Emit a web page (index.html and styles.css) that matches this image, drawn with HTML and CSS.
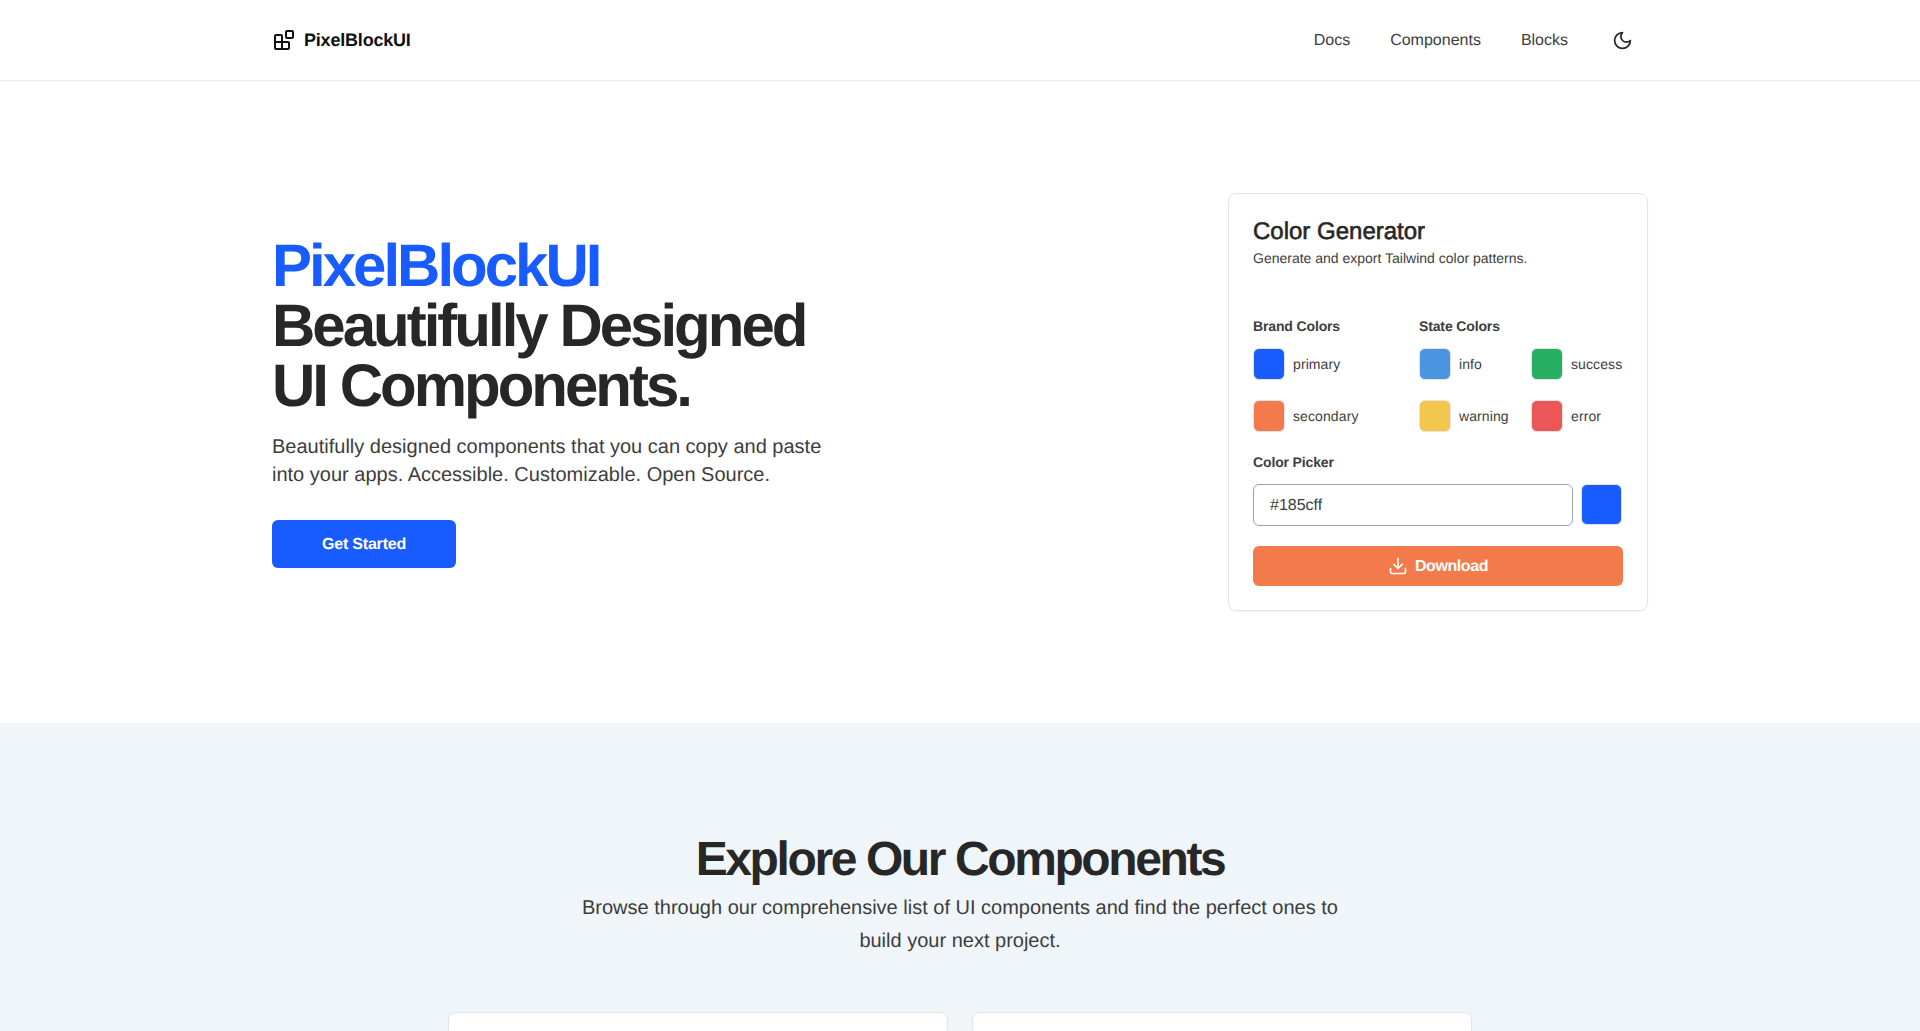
FILE: index.html
```html
<!DOCTYPE html>
<html lang="en">
<head>
    <meta charset="UTF-8">
    <title>PixelBlockUI</title>
    <link rel="stylesheet" href="styles.css">
</head>
<body>

<header class="navbar">
    <div class="navbar-inner">
        <a class="brand">
            <svg class="brand-icon" viewBox="0 0 24 24" fill="none" stroke="currentColor" stroke-width="2" stroke-linecap="round" stroke-linejoin="round">
                <rect x="14" y="3" width="7" height="7" rx="1"></rect>
                <path d="M10 21V8a1 1 0 0 0-1-1H4a1 1 0 0 0-1 1v12a1 1 0 0 0 1 1h12a1 1 0 0 0 1-1v-5a1 1 0 0 0-1-1H3"></path>
            </svg>
            <span>PixelBlockUI</span>
        </a>
        <nav class="nav">
            <a>Docs</a>
            <a>Components</a>
            <a>Blocks</a>
            <svg class="moon" viewBox="0 0 24 24" fill="none" stroke="currentColor" stroke-width="2" stroke-linecap="round" stroke-linejoin="round">
                <path d="M12 3a6 6 0 0 0 9 9 9 9 0 1 1-9-9Z"></path>
            </svg>
        </nav>
    </div>
</header>

<section class="hero">
    <div class="hero-text">
        <h1><span class="accent">PixelBlockUI</span><br>Beautifully Designed<br>UI Components.</h1>
        <p>Beautifully designed components that you can copy and paste into your apps. Accessible. Customizable. Open Source.</p>
        <a class="btn-start">Get Started</a>
    </div>

    <div class="card">
        <h3>Color Generator</h3>
        <p class="card-sub">Generate and export Tailwind color patterns.</p>

        <div class="palettes">
            <div class="palette-brand">
                <h4>Brand Colors</h4>
                <div class="swatches">
                    <div class="swatch"><i class="chip primary"></i>primary</div>
                    <div class="swatch"><i class="chip secondary"></i>secondary</div>
                </div>
            </div>
            <div class="palette-state">
                <h4>State Colors</h4>
                <div class="swatches two">
                    <div class="swatch"><i class="chip info"></i>info</div>
                    <div class="swatch"><i class="chip success"></i>success</div>
                    <div class="swatch"><i class="chip warning"></i>warning</div>
                    <div class="swatch"><i class="chip error"></i>error</div>
                </div>
            </div>
        </div>

        <h4>Color Picker</h4>
        <div class="picker">
            <div class="picker-input">#185cff</div>
            <div class="picker-color"></div>
        </div>
        <a class="btn-download">
            <svg viewBox="0 0 24 24" fill="none" stroke="currentColor" stroke-width="2" stroke-linecap="round" stroke-linejoin="round">
                <path d="M21 15v4a2 2 0 0 1-2 2H5a2 2 0 0 1-2-2v-4"></path>
                <polyline points="7 10 12 15 17 10"></polyline>
                <line x1="12" y1="15" x2="12" y2="3"></line>
            </svg>
            <span>Download</span>
        </a>
    </div>
</section>

<section class="explore">
    <h2>Explore Our Components</h2>
    <p>Browse through our comprehensive list of UI components and find the perfect ones to build your next project.</p>
    <div class="grid">
        <div class="tile"></div>
        <div class="tile"></div>
    </div>
</section>

</body>
</html>
```

FILE: styles.css
```css
* {
    box-sizing: border-box;
    margin: 0;
    padding: 0;
}

body {
    font-family: "Liberation Sans", Arial, sans-serif;
    color: #272727;
    background: #fff;
    text-rendering: geometricPrecision;
}

.navbar {
    height: 81px;
    border-bottom: 1px solid #eee;
    box-shadow: 0 1px 2px rgba(0, 0, 0, 0.03);
}

.navbar-inner {
    width: 1376px;
    height: 100%;
    margin: 0 auto;
    display: flex;
    align-items: center;
    justify-content: space-between;
}

.brand {
    display: flex;
    align-items: center;
    gap: 8px;
    font-size: 18px;
    font-weight: 700;
    letter-spacing: -0.2px;
    color: #111;
}

.brand-icon {
    width: 24px;
    height: 24px;
    flex: none;
}

.nav {
    display: flex;
    align-items: center;
    gap: 40px;
    padding-right: 15px;
    font-size: 16px;
    color: #3d3d3d;
}

.nav a {
    padding-top: 1px;
}

.moon {
    width: 21px;
    height: 21px;
    margin-left: 4px;
    color: #272727;
}

.hero {
    width: 1376px;
    height: 642px;
    margin: 0 auto;
    display: flex;
    align-items: center;
    justify-content: space-between;
}

.hero-text {
    width: 560px;
}

.hero-text h1 {
    font-size: 60px;
    line-height: 60px;
    font-weight: 700;
    letter-spacing: -3px;
    white-space: nowrap;
}

.accent {
    color: #185cff;
}

.hero-text p {
    margin-top: 17px;
    font-size: 20px;
    line-height: 28px;
    color: #3d3d3d;
}

.btn-start {
    display: inline-block;
    margin-top: 31px;
    padding: 0 50px;
    height: 48px;
    line-height: 50px;
    border-radius: 6px;
    background: #185cff;
    color: #fff;
    font-size: 16px;
    font-weight: 700;
    letter-spacing: -0.2px;
}

.card {
    width: 420px;
    padding: 24px;
    border: 1px solid #e4e4e7;
    border-radius: 8px;
    box-shadow: 0 1px 2px rgba(0, 0, 0, 0.05);
}

.card h3 {
    font-size: 24px;
    line-height: 27px;
    font-weight: 400;
    -webkit-text-stroke: 0.6px #272727;
}

.card-sub {
    margin-top: 3px;
    font-size: 14px;
    line-height: 20px;
    color: #3d3d3d;
}

.card h4 {
    font-size: 14px;
    line-height: 20px;
    font-weight: 700;
    letter-spacing: -0.14px;
    color: #3d3d3d;
}

.palettes {
    display: flex;
    margin-top: 48px;
    gap: 60px;
}

.palette-brand {
    width: 106px;
}

.swatches {
    margin-top: 12px;
    display: grid;
    row-gap: 20px;
}

.swatches.two {
    grid-template-columns: 112px auto;
}

.swatch {
    display: flex;
    align-items: center;
    gap: 8px;
    font-size: 14px;
    letter-spacing: 0.1px;
    color: #3d3d3d;
}

.chip {
    width: 32px;
    height: 32px;
    border-radius: 6px;
    border: 1px solid #e4e4e7;
}

.primary { background: #185cff; }
.secondary { background: #f37b4b; }
.info { background: #4a94e0; }
.success { background: #27ae60; }
.warning { background: #f2c74c; }
.error { background: #eb5757; }

.card > h4 {
    margin-top: 20px;
}

.picker {
    display: flex;
    gap: 8px;
    margin-top: 12px;
}

.picker-input {
    width: 320px;
    height: 42px;
    line-height: 42px;
    padding-left: 16px;
    border: 1px solid #9ca3af;
    border-radius: 6px;
    font-size: 16px;
    color: #3d3d3d;
}

.picker-color {
    width: 41px;
    height: 41px;
    border-radius: 6px;
    border: 1px solid #e4e4e7;
    background: #185cff;
}

.btn-download {
    margin-top: 20px;
    height: 40px;
    display: flex;
    align-items: center;
    justify-content: center;
    gap: 7px;
    border-radius: 6px;
    background: #f37b4b;
    color: #fff;
    font-size: 16px;
    font-weight: 700;
    letter-spacing: -0.4px;
}

.btn-download span {
    padding-top: 1px;
}

.btn-download svg {
    width: 20px;
    height: 20px;
}

.explore {
    background: #f0f5f9;
    padding-top: 113px;
    height: 308px;
    overflow: hidden;
    text-align: center;
}

.explore h2 {
    font-size: 48px;
    line-height: 48px;
    letter-spacing: -2.4px;
}

.explore p {
    width: 768px;
    margin: 8px auto 0;
    font-size: 20px;
    line-height: 33px;
    color: #3d3d3d;
}

.grid {
    display: flex;
    justify-content: center;
    gap: 24px;
    margin-top: 54px;
}

.tile {
    width: 500px;
    height: 200px;
    background: #fff;
    border: 1px solid #e4e4e7;
    border-radius: 8px;
}
```
